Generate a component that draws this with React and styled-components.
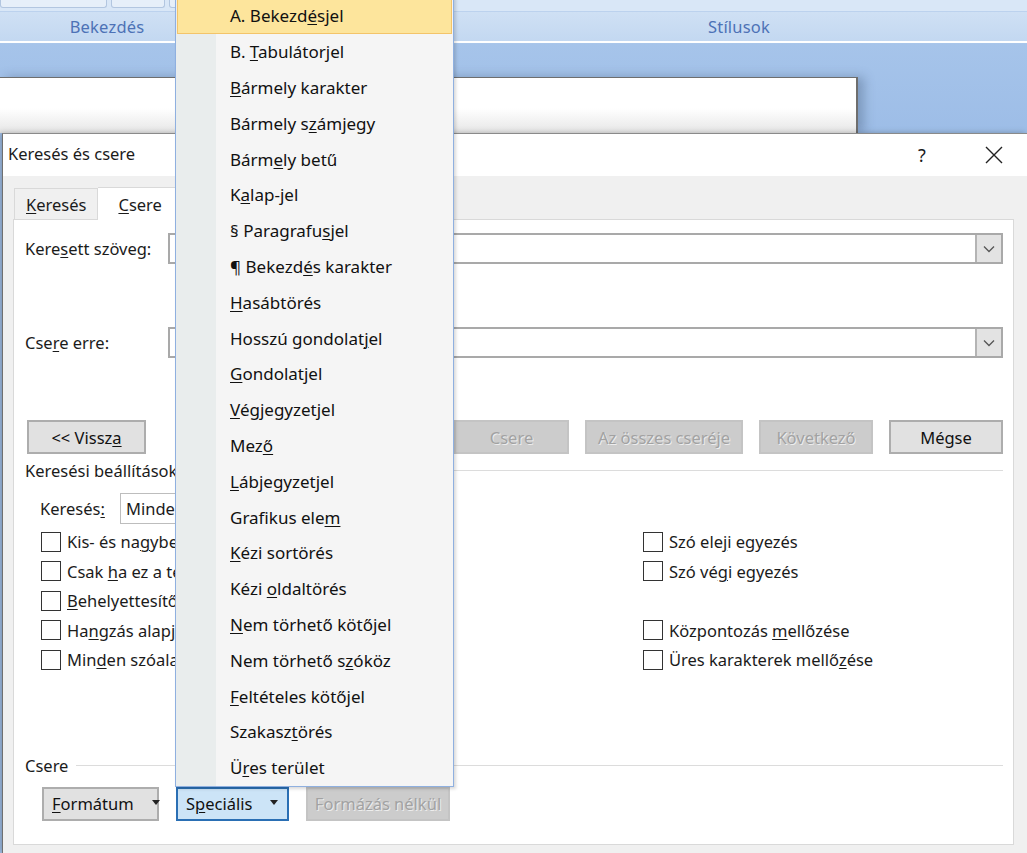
import React from 'react';
import styled, { createGlobalStyle } from 'styled-components';

const UI_FONT = '"Noto Sans", "Open Sans", Arial, sans-serif';

const GlobalStyle = createGlobalStyle`
  html, body {
    margin: 0;
    padding: 0;
    width: 1027px;
    height: 853px;
    overflow: hidden;
    background: #a3c2ea;
  }
  body {
    font-family: ${UI_FONT};
    font-size: 16.5px;
    color: #1b1b1b;
  }
  * { box-sizing: border-box; }
  u { text-underline-offset: 2px; text-decoration-thickness: 1px; }
`;

const Page = styled.div`
  position: relative;
  width: 1027px;
  height: 853px;
  overflow: hidden;
`;

/* ---------- Word ribbon behind the dialog ---------- */

const Ribbon = styled.div`
  height: 44px;
  display: flex;
  flex-direction: column;
  background: #d9e7f7;
  border-bottom: 1px solid #9fbde6;
`;

const RibbonButtons = styled.div`
  height: 13px;
  display: flex;
  gap: 4px;
  border-bottom: 1px solid #bcd2ee;
`;

const RibbonButtonEdge = styled.div`
  width: ${({ $w }) => $w}px;
  height: 8px;
  border: 1px solid #b2c6e0;
  border-top: none;
  border-radius: 0 0 3px 3px;
  background: #e6eff9;
`;

const GroupRow = styled.div`
  flex: 1;
  display: flex;
  background: linear-gradient(#cfe0f4, #c3d8f1);
  border-bottom: 2px solid #ffffff;
  box-shadow: 0 1px 0 #a9c6ea;
`;

const GroupLabel = styled.div`
  width: ${({ $w }) => $w}px;
  text-align: center;
  line-height: 29px;
  font-size: 16.5px;
  color: #4d72b6;
  letter-spacing: 0.2px;
`;

const Workspace = styled.div`
  height: 89px;
  padding-top: 33px;
  background: linear-gradient(#a6c4ea, #9dbde7);
`;

const DocPage = styled.div`
  width: 858px;
  height: 56px;
  background: linear-gradient(#ffffff 55%, #e6e6e6);
  border-top: 1px solid #6e6e6e;
  border-right: 2px solid #6e6e6e;
  box-shadow: 6px 0 10px rgba(60, 80, 110, 0.35);
`;

/* ---------- dialog ---------- */

const Dialog = styled.div`
  margin-left: 2px;
  height: 720px;
  background: #f0f0f0;
  border-left: 1px solid #707070;
  border-top: 1px solid #8a8a8a;
  box-shadow: -2px 0 6px rgba(0, 0, 0, 0.25);
`;

const TitleBar = styled.div`
  height: 42px;
  background: #ffffff;
  display: flex;
  align-items: center;
  padding-left: 5px;
`;

const Title = styled.div`
  flex: 1;
  padding-bottom: 3px;
`;

const TitleButton = styled.div`
  width: 46px;
  display: flex;
  justify-content: center;
  font-size: 18px;
  margin-right: ${({ $mr }) => $mr || 0}px;
`;

const Body = styled.div`
  padding: 10px 0 0 10px;
`;

const TabStrip = styled.div`
  display: flex;
  align-items: flex-end;
  height: 33px;
  padding-left: 1px;
`;

const Tab = styled.div`
  height: ${({ $active }) => ($active ? 33 : 31)}px;
  padding: 0 ${({ $active }) => ($active ? 20 : 11)}px;
  background: ${({ $active }) => ($active ? '#ffffff' : '#f0f0f0')};
  border: 1px solid #d9d9d9;
  border-bottom: none;
  border-left: ${({ $active }) => ($active ? 'none' : '1px solid #d9d9d9')};
  display: flex;
  align-items: center;
  margin-bottom: ${({ $active }) => ($active ? -1 : 0)}px;
  position: relative;
  z-index: 1;
`;

const Panel = styled.div`
  width: 1001px;
  height: 626px;
  background: #ffffff;
  border: 1px solid #d9d9d9;
  padding: 0 10px 0 11px;
  display: flex;
  flex-direction: column;
`;

const FieldRow = styled.div`
  display: flex;
  align-items: center;
  margin-top: ${({ $mt }) => $mt}px;
`;

const FieldLabel = styled.div`
  width: 143px;
`;

const Combo = styled.div`
  flex: 1;
  height: 31px;
  border: 2px solid #a9a9a9;
  display: flex;
  justify-content: flex-end;
  background: #ffffff;
`;

const ComboArrow = styled.div`
  width: 26px;
  background: #e3e3e3;
  border-left: 2px solid #b4b4b4;
  display: flex;
  align-items: center;
  justify-content: center;
`;

const ButtonRow = styled.div`
  display: flex;
  align-items: center;
  margin-top: ${({ $mt }) => $mt}px;
  padding-left: ${({ $pl }) => $pl || 0}px;
  gap: ${({ $gap }) => $gap || 16}px;
`;

const Spacer = styled.div`
  flex: 1;
`;

const Button = styled.div`
  width: ${({ $w }) => $w}px;
  height: 34px;
  display: flex;
  align-items: center;
  justify-content: ${({ $left }) => ($left ? 'flex-start' : 'center')};
  padding-left: ${({ $left }) => ($left ? 8 : 0)}px;
  background: ${({ $disabled, $focus }) => ($disabled ? '#cccccc' : $focus ? '#cce4f7' : '#e1e1e1')};
  border: ${({ $disabled, $focus }) =>
    $disabled ? '2px solid #c4c4c4' : $focus ? '2px solid #2a6fb4' : '2px solid #adadad'};
  color: ${({ $disabled }) => ($disabled ? '#a2a2a2' : '#111111')};
  text-shadow: ${({ $disabled }) => ($disabled ? '1px 1px 0 #ededed' : 'none')};
  white-space: nowrap;
`;

const Caret = styled.span`
  display: inline-block;
  margin-left: 18px;
  width: 0;
  height: 0;
  border-left: 4px solid transparent;
  border-right: 4px solid transparent;
  border-top: 5px solid #222;
  transform: translateY(-1px);
`;

const SectionHeading = styled.div`
  display: flex;
  align-items: center;
  gap: 8px;
  margin-top: ${({ $mt }) => $mt}px;
  height: 22px;
  &::after {
    content: '';
    flex: 1;
    border-top: 1px solid #dcdcdc;
  }
`;

const SearchRow = styled.div`
  display: flex;
  align-items: center;
  margin-top: 12px;
  padding-left: 15px;
`;

const SearchLabel = styled.div`
  width: 80px;
`;

const Select = styled.div`
  width: 220px;
  height: 31px;
  border: 1px solid #bdbdbd;
  padding-left: 5px;
  display: flex;
  align-items: center;
`;

const OptionsGrid = styled.div`
  display: grid;
  grid-template-columns: 602px 1fr;
  grid-auto-rows: 29.5px;
  margin-top: 3px;
  padding-left: 16px;
`;

const CheckRow = styled.label`
  grid-column: ${({ $col }) => $col};
  grid-row: ${({ $row }) => $row};
  display: flex;
  align-items: center;
  gap: 6px;
  white-space: nowrap;
`;

const CheckBox = styled.span`
  width: 20px;
  height: 20px;
  border: 1px solid #333333;
  background: #ffffff;
  flex: none;
`;

/* ---------- drop-down menu (overlay) ---------- */

const Menu = styled.div`
  position: absolute;
  left: 175px;
  top: -4px;
  width: 279px;
  background: linear-gradient(to right, #e9eded 0 40px, #f5f5f5 40px);
  border: 1px solid #8fb0e0;
  box-shadow: 2px 2px 3px rgba(0, 0, 0, 0.15);
  z-index: 10;
  padding-top: 1px;
`;

const MenuItem = styled.div`
  height: 35.8px;
  display: flex;
  align-items: center;
  padding-left: ${({ $hot }) => ($hot ? 52 : 53)}px;
  margin: 0 1px;
  font-size: 17px;
  color: #111111;
  background: ${({ $hot }) => ($hot ? '#fde59c' : 'transparent')};
  border: ${({ $hot }) => ($hot ? '1px solid #f3c46a' : 'none')};
`;

const Mn = ({ text, at }) => (
  <span>
    {text.slice(0, at)}
    <u>{text[at]}</u>
    {text.slice(at + 1)}
  </span>
);

const menuItems = [
  ['A. Bekezdésjel', 9],
  ['B. Tabulátorjel', 3],
  ['Bármely karakter', 0],
  ['Bármely számjegy', 9],
  ['Bármely betű', 4],
  ['Kalap-jel', 1],
  ['§ Paragrafusjel', 11],
  ['¶ Bekezdés karakter', 8],
  ['Hasábtörés', 0],
  ['Hosszú gondolatjel', 15],
  ['Gondolatjel', 0],
  ['Végjegyzetjel', 0],
  ['Mező', 3],
  ['Lábjegyzetjel', 0],
  ['Grafikus elem', 12],
  ['Kézi sortörés', 0],
  ['Kézi oldaltörés', 5],
  ['Nem törhető kötőjel', 0],
  ['Nem törhető szóköz', 13],
  ['Feltételes kötőjel', 0],
  ['Szakasztörés', 7],
  ['Üres terület', 1],
];

const leftOptions = [
  ['Kis- és nagybetű megkülönböztetése', 10],
  ['Csak ha ez a teljes szó', 5],
  ['Behelyettesítő karakterek', 0],
  ['Hangzás alapján (angol)', 2],
  ['Minden szóalak keresése (angol)', 3],
];

const rightOptions = [
  ['Szó eleji egyezés', 7, 1],
  ['Szó végi egyezés', 6, 2],
  ['Központozás mellőzése', 12, 4],
  ['Üres karakterek mellőzése', 21, 5],
];

const Chevron = () => (
  <svg width="12" height="8" viewBox="0 0 12 8">
    <path d="M1 1.5 L6 6.5 L11 1.5" fill="none" stroke="#555" strokeWidth="1.3" />
  </svg>
);

const CloseIcon = () => (
  <svg width="18" height="18" viewBox="0 0 18 18">
    <path d="M1 1 L17 17 M17 1 L1 17" stroke="#222" strokeWidth="1.4" />
  </svg>
);

export default function App() {
  return (
    <Page>
      <GlobalStyle />
      <Ribbon>
        <RibbonButtons>
          <RibbonButtonEdge $w={107} />
          <RibbonButtonEdge $w={54} />
          <RibbonButtonEdge $w={46} />
        </RibbonButtons>
        <GroupRow>
          <GroupLabel $w={214}>Bekezdés</GroupLabel>
          <GroupLabel $w={237} />
          <GroupLabel $w={576}>Stílusok</GroupLabel>
        </GroupRow>
      </Ribbon>
      <Workspace>
        <DocPage />
      </Workspace>

      <Dialog>
        <TitleBar>
          <Title>Keresés és csere</Title>
          <TitleButton $mr={26}>?</TitleButton>
          <TitleButton $mr={10}>
            <CloseIcon />
          </TitleButton>
        </TitleBar>
        <Body>
          <TabStrip>
            <Tab>
              <Mn text="Keresés" at={0} />
            </Tab>
            <Tab $active>
              <Mn text="Csere" at={0} />
              <span style={{ width: 40 }} />
            </Tab>
          </TabStrip>
          <Panel>
            <FieldRow $mt={13}>
              <FieldLabel>
                <Mn text="Keresett szöveg:" at={4} />
              </FieldLabel>
              <Combo>
                <ComboArrow>
                  <Chevron />
                </ComboArrow>
              </Combo>
            </FieldRow>
            <FieldRow $mt={63}>
              <FieldLabel>
                <Mn text="Csere erre:" at={3} />
              </FieldLabel>
              <Combo>
                <ComboArrow>
                  <Chevron />
                </ComboArrow>
              </Combo>
            </FieldRow>

            <ButtonRow $mt={62} $pl={2}>
              <Button $w={119}>
                <Mn text="<< Vissza" at={8} />
              </Button>
              <Spacer />
              <Button $w={115} $disabled>Csere</Button>
              <Button $w={158} $disabled>Az összes cseréje</Button>
              <Button $w={114} $disabled>Következő</Button>
              <Button $w={114}>Mégse</Button>
            </ButtonRow>

            <SectionHeading $mt={5}>Keresési beállítások</SectionHeading>
            <SearchRow>
              <SearchLabel>
                <Mn text="Keresés:" at={7} />
              </SearchLabel>
              <Select>Mindent</Select>
            </SearchRow>

            <OptionsGrid>
              {leftOptions.map(([t, at], i) => (
                <CheckRow key={t} $col={1} $row={i + 1}>
                  <CheckBox />
                  <Mn text={t} at={at} />
                </CheckRow>
              ))}
              {rightOptions.map(([t, at, row]) => (
                <CheckRow key={t} $col={2} $row={row}>
                  <CheckBox />
                  <Mn text={t} at={at} />
                </CheckRow>
              ))}
            </OptionsGrid>

            <SectionHeading $mt={80}>Csere</SectionHeading>
            <ButtonRow $mt={10} $pl={17} $gap={17}>
              <Button $w={117} $left>
                <Mn text="Formátum" at={0} />
                <Caret />
              </Button>
              <Button $w={113} $left $focus>
                <Mn text="Speciális" at={1} />
                <Caret />
              </Button>
              <Button $w={144} $disabled>Formázás nélkül</Button>
            </ButtonRow>
          </Panel>
        </Body>
      </Dialog>

      <Menu>
        {menuItems.map(([t, at], i) => (
          <MenuItem key={t} $hot={i === 0}>
            <Mn text={t} at={at} />
          </MenuItem>
        ))}
      </Menu>
    </Page>
  );
}
